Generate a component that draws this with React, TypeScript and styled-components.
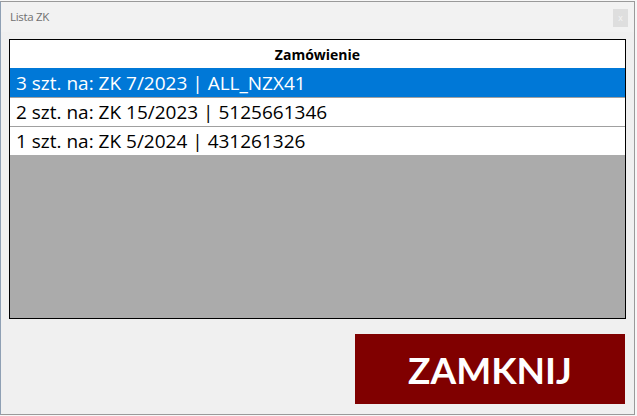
import React from "react";
import styled, { createGlobalStyle } from "styled-components";

const GlobalStyle = createGlobalStyle`
  html, body {
    margin: 0;
    padding: 0;
    background: #f7f7f7;
  }
`;

const Screen = styled.div`
  width: 637px;
  height: 416px;
  overflow: hidden;
  padding-top: 1px;
  box-sizing: border-box;
`;

const Window = styled.div`
  width: 635px;
  height: 414px;
  box-sizing: border-box;
  border: 1px solid #9a9a9a;
  border-left-color: #8fa0b4;
  background: #f0f0f0;
  display: flex;
  flex-direction: column;
  font-family: "Open Sans", "Noto Sans", sans-serif;
`;

const TitleBar = styled.div`
  height: 30px;
  display: flex;
  align-items: center;
  justify-content: space-between;
  padding: 0 6px 0 9px;
  background: #f2f2f2;
  flex-shrink: 0;
`;

const Title = styled.span`
  font-family: "Open Sans", sans-serif;
  font-size: 11.5px;
  color: #707070;
  letter-spacing: -0.3px;
  margin-top: -1px;
`;

const CloseBox = styled.div`
  width: 15px;
  height: 18px;
  background: #dedede;
  display: flex;
  align-items: center;
  justify-content: center;
  color: #f4f4f4;
  font-size: 9px;
  font-family: "Liberation Sans", sans-serif;
  margin-top: 2px;
`;

const Body = styled.div`
  flex: 1;
  display: flex;
  flex-direction: column;
  padding: 7px 8px 10px 8px;
`;

const ListBox = styled.div`
  height: 280px;
  box-sizing: border-box;
  border: 1px solid #000;
  background: #ababab;
  display: flex;
  flex-direction: column;
`;

const HeaderRow = styled.div`
  height: 28px;
  background: #fff;
  display: flex;
  align-items: center;
  justify-content: center;
  font-size: 14px;
  font-weight: 700;
  color: #000;
`;

const Row = styled.div<{ selected?: boolean }>`
  height: 28px;
  border-top: 1px solid ${({ selected }) => (selected ? "#0078d7" : "#a0a0a0")};
  background: ${({ selected }) => (selected ? "#0078d7" : "#fff")};
  color: ${({ selected }) => (selected ? "#fff" : "#000")};
  display: flex;
  align-items: center;
  padding-left: 6px;
  font-size: 19px;
  white-space: nowrap;
`;

const Footer = styled.div`
  flex: 1;
  display: flex;
  justify-content: flex-end;
  align-items: flex-end;
  padding-right: 1px;
`;

const CloseButton = styled.button`
  width: 270px;
  height: 70px;
  border: none;
  background: #800000;
  color: #fff;
  font-family: "Lato", sans-serif;
  font-weight: 700;
  font-size: 37px;
  cursor: pointer;
`;

const rows = [
  "3 szt. na: ZK 7/2023 | ALL_NZX41",
  "2 szt. na: ZK 15/2023 | 5125661346",
  "1 szt. na: ZK 5/2024 | 431261326",
];

export default function App() {
  return (
    <Screen>
      <GlobalStyle />
      <Window>
        <TitleBar>
          <Title>Lista ZK</Title>
          <CloseBox>x</CloseBox>
        </TitleBar>
        <Body>
          <ListBox>
            <HeaderRow>Zamówienie</HeaderRow>
            {rows.map((r, i) => (
              <Row key={r} selected={i === 0}>
                {r}
              </Row>
            ))}
          </ListBox>
          <Footer>
            <CloseButton>ZAMKNIJ</CloseButton>
          </Footer>
        </Body>
      </Window>
    </Screen>
  );
}
